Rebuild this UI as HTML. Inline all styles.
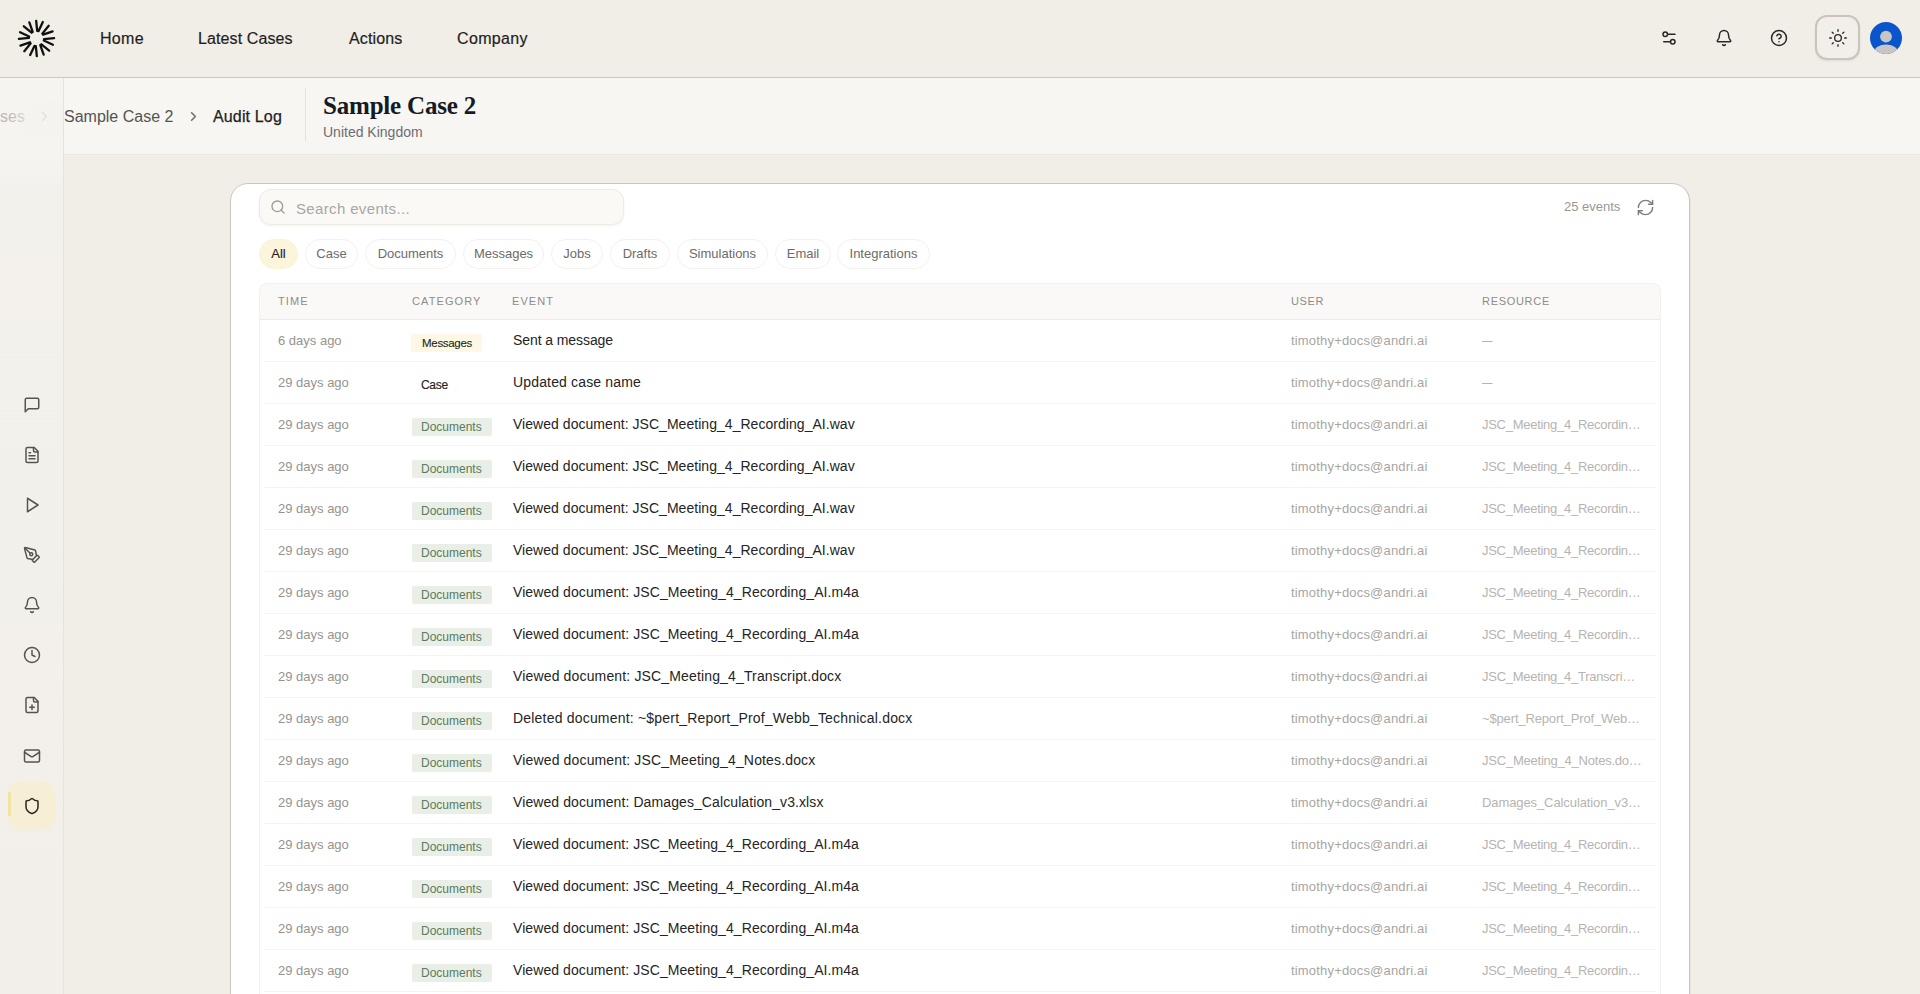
<!DOCTYPE html>
<html><head><meta charset="utf-8">
<style>
*{box-sizing:border-box;margin:0;padding:0}
html,body{width:1920px;height:994px;overflow:hidden;background:#f1eee8;font-family:"Liberation Sans",sans-serif;color:#1f1f1f}
.abs{position:absolute}
svg.i{position:absolute;fill:none;stroke:currentColor;stroke-width:2;stroke-linecap:round;stroke-linejoin:round}
#hdr{position:absolute;left:0;top:0;width:1920px;height:78px;background:#f1eee8;border-bottom:1px solid #cdc8bf}
.nav{position:absolute;top:29px;font-size:16px;color:#1f1f1f;line-height:20px;white-space:nowrap;-webkit-text-stroke:0.2px #1f1f1f}
.hic{color:#2a2826}
#sunbtn{position:absolute;left:1815px;top:15px;width:45px;height:45px;border:2px solid #cac4bb;border-radius:12px;background:#f2efea;box-shadow:0 1px 2px rgba(0,0,0,.08)}
#avatar{position:absolute;left:1870px;top:22px;width:32px;height:32px;border-radius:50%;background:#0a54cc;overflow:hidden}
#crumb{position:absolute;left:0;top:78px;width:1920px;height:77px;background:#f7f6f2;border-bottom:1px solid #ebe8e2}
.bcr{position:absolute;top:107px;font-size:16px;line-height:20px;white-space:nowrap}
#side{position:absolute;left:0;top:78px;width:64px;height:916px;border-right:1px solid #e6e3dd;background:linear-gradient(180deg,#f6f4f0 0,#f6f4f0 77px,#f3f1ec 110px,#f2efea 100%)}
#sidefade{position:absolute;left:0;top:78px;width:63px;height:77px;background:linear-gradient(90deg,rgba(244,242,238,.55),rgba(246,245,241,.35))}
.sic{width:18px;height:18px;color:#57544f}
#active{position:absolute;left:8px;top:782px;width:47px;height:48px;border-radius:12px;background:#f6efd5}
#activebar{position:absolute;left:8px;top:792px;width:2.5px;height:24px;background:#efe3a2;border-radius:1px}
#card{position:absolute;left:230px;top:183px;width:1460px;height:900px;background:#fff;border:1px solid #cbc6bd;border-radius:18px;box-shadow:1px 1px 1px rgba(0,0,0,.05)}
#search{position:absolute;left:259px;top:189px;width:365px;height:36px;border:1px solid #eeebe5;border-radius:12px;background:#faf9f6;box-shadow:0 1px 3px rgba(0,0,0,.06)}
.ph{position:absolute;left:296px;top:200px;font-size:15px;line-height:18px;color:#a9a7a3;letter-spacing:0.35px;white-space:nowrap}
.cnt{position:absolute;left:1564px;top:199px;font-size:13px;line-height:16px;color:#999794;white-space:nowrap}
.chip{position:absolute;top:239px;height:30px;border:1px solid #f3f1ee;border-radius:15px;font-size:13px;line-height:28px;text-align:center;color:#6d6b67;white-space:nowrap;background:#fff}
.chip.on{background:#fbf5dc;border-color:#faf3d8;color:#1f1f1f;-webkit-text-stroke:0.15px #1f1f1f}
#thead{position:absolute;left:259px;top:283px;width:1402px;height:37px;background:#faf9f7;border:1px solid #f3f1ed;border-bottom:1px solid #eeebe6;border-radius:8px 8px 0 0}
#tbody{position:absolute;left:259px;top:319px;width:1402px;height:700px;border-left:1px solid #f3f1ed;border-right:1px solid #f3f1ed}
.th{position:absolute;top:295px;font-size:11px;line-height:12px;letter-spacing:1.1px;color:#8e8c88;white-space:nowrap}
.row{position:absolute;left:260px;width:1400px;height:42px}
.row::after{content:"";position:absolute;left:4px;right:4px;bottom:0;height:1px;background:#f6f4f1}
.row>div{position:absolute;white-space:nowrap}
.tm{left:18px;top:13px;font-size:13px;line-height:16px;color:#959390}
.bdg{left:151px;top:14px;height:18px;font-size:12px;line-height:18px;padding:0 10px;border-radius:2px}
.bm{background:#fdf8e5;color:#262420;font-size:11.5px;letter-spacing:-0.3px;padding:0 10px 0 11px;-webkit-text-stroke:0.1px #262420}
.bc{color:#262420;letter-spacing:-0.3px;-webkit-text-stroke:0.15px #262420}
.bd{background:#e9eee6;color:#5b7b5a;margin-left:1px;padding:0 10px 0 9px}
.ev{left:253px;top:12px;font-size:14px;line-height:17px;color:#242424}
.us{left:1031px;top:13px;font-size:13px;line-height:16px;color:#a7a5a2;letter-spacing:0.18px}
.rs{left:1222px;top:13px;font-size:13px;line-height:16px;color:#b6b4b0}
</style></head><body>
<div id="hdr">
  <svg class="abs" style="left:17px;top:19px" width="39" height="39" viewBox="-19.5 -19.5 39 39"><path fill="none" stroke="#111" stroke-width="2.3" stroke-linecap="round" d="M0.66 -7.57L-0.31 -17.60M1.97 -7.34L6.31 -16.43M5.82 -4.89L12.23 -12.66M6.58 -3.80L16.08 -7.16M7.57 0.66L17.60 -0.31M7.34 1.97L16.43 6.31M4.89 5.82L12.66 12.23M3.80 6.58L7.16 16.08M-0.66 7.57L0.31 17.60M-1.97 7.34L-6.31 16.43M-5.82 4.89L-12.23 12.66M-6.58 3.80L-16.08 7.16M-7.57 -0.66L-17.60 0.31M-7.34 -1.97L-16.43 -6.31M-4.89 -5.82L-12.66 -12.23M-3.80 -6.58L-7.16 -16.08"/></svg>
  <div class="nav" style="left:100px;letter-spacing:0.3px">Home</div>
  <div class="nav" style="left:198px;letter-spacing:0.1px">Latest Cases</div>
  <div class="nav" style="left:349px;letter-spacing:0.15px">Actions</div>
  <div class="nav" style="left:457px;letter-spacing:0.35px">Company</div>
  <svg class="i hic" style="left:1660px;top:29px" width="18" height="18" viewBox="0 0 24 24"><path d="M20 7h-9"/><path d="M14 17H5"/><circle cx="17" cy="17" r="3"/><circle cx="7" cy="7" r="3"/></svg>
  <svg class="i hic" style="left:1715px;top:29px" width="18" height="18" viewBox="0 0 24 24"><path d="M10.268 21a2 2 0 0 0 3.464 0"/><path d="M3.262 15.326A1 1 0 0 0 4 17h16a1 1 0 0 0 .74-1.673C19.41 13.956 18 12.499 18 8A6 6 0 0 0 6 8c0 4.499-1.411 5.956-2.738 7.326"/></svg>
  <svg class="i hic" style="left:1770px;top:29px" width="18" height="18" viewBox="0 0 24 24"><circle cx="12" cy="12" r="10"/><path d="M9.09 9a3 3 0 0 1 5.83 1c0 2-3 3-3 3"/><path d="M12 17h.01"/></svg>
</div>
<div id="sunbtn"></div>
<svg class="i hic" style="left:1828px;top:28px;stroke-width:1.6" width="20" height="20" viewBox="0 0 24 24"><circle cx="12" cy="12" r="4"/><path d="M12 2v2"/><path d="M12 20v2"/><path d="m4.93 4.93 1.41 1.41"/><path d="m17.66 17.66 1.41 1.41"/><path d="M2 12h2"/><path d="M20 12h2"/><path d="m6.34 17.66-1.41 1.41"/><path d="m19.07 4.93-1.41 1.41"/></svg>
<div id="avatar"><svg width="32" height="32" viewBox="0 0 32 32"><circle cx="16" cy="14.6" r="5.9" fill="#c8c6c4"/><ellipse cx="16" cy="30.5" rx="12" ry="8" fill="#c8c6c4"/></svg></div>

<div id="crumb"></div>
<div class="bcr" style="left:64px;color:#555350">Sample Case 2</div>
<svg class="i" style="left:186px;top:109px;color:#66756a;stroke-width:2.6" width="15" height="15" viewBox="0 0 24 24"><path d="m9 18 6-6-6-6"/></svg>
<div class="bcr" style="left:213px;color:#1f1f1f;-webkit-text-stroke:0.25px #1f1f1f;letter-spacing:0.15px">Audit Log</div>
<div class="abs" style="left:305px;top:88px;width:1px;height:53px;background:#e7e2cf"></div>
<div class="abs" style="left:323px;top:92px;font-family:'Liberation Serif',serif;font-weight:bold;font-size:25px;letter-spacing:-0.2px;line-height:28px;color:#151a23;white-space:nowrap">Sample Case 2</div>
<div class="abs" style="left:323px;top:124px;font-size:14px;line-height:16px;color:#6e6c72;white-space:nowrap">United Kingdom</div>

<div id="side"></div>
<div class="bcr" style="left:0;color:#bab8b3">ses</div><div class="abs" style="left:8px;top:100px;width:55px;height:34px;background:linear-gradient(90deg,rgba(245,243,239,0),rgba(245,243,239,.75) 45%,rgba(245,243,239,.8))"></div>
<svg class="i" style="left:37px;top:109px;color:#e2e0dc;stroke-width:2.4" width="15" height="15" viewBox="0 0 24 24"><path d="m9 18 6-6-6-6"/></svg>
<svg class="i sic" style="left:23px;top:396px" viewBox="0 0 24 24"><path d="M21 15a2 2 0 0 1-2 2H7l-4 4V5a2 2 0 0 1 2-2h14a2 2 0 0 1 2 2z"/></svg>
<svg class="i sic" style="left:23px;top:446px" viewBox="0 0 24 24"><path d="M15 2H6a2 2 0 0 0-2 2v16a2 2 0 0 0 2 2h12a2 2 0 0 0 2-2V7Z"/><path d="M14 2v4a2 2 0 0 0 2 2h4"/><path d="M10 9H8"/><path d="M16 13H8"/><path d="M16 17H8"/></svg>
<svg class="i sic" style="left:23px;top:496px" viewBox="0 0 24 24"><polygon points="6 3 20 12 6 21 6 3"/></svg>
<svg class="i sic" style="left:23px;top:546px" viewBox="0 0 24 24"><path d="M15.707 21.293a1 1 0 0 1-1.414 0l-1.586-1.586a1 1 0 0 1 0-1.414l5.586-5.586a1 1 0 0 1 1.414 0l1.586 1.586a1 1 0 0 1 0 1.414z"/><path d="m18 13-1.375-6.874a1 1 0 0 0-.746-.776L3.235 2.028a1 1 0 0 0-1.207 1.207L5.35 15.879a1 1 0 0 0 .776.746L13 18"/><path d="m2.3 2.3 7.286 7.286"/><circle cx="11" cy="11" r="2"/></svg>
<svg class="i sic" style="left:23px;top:596px" viewBox="0 0 24 24"><path d="M10.268 21a2 2 0 0 0 3.464 0"/><path d="M3.262 15.326A1 1 0 0 0 4 17h16a1 1 0 0 0 .74-1.673C19.41 13.956 18 12.499 18 8A6 6 0 0 0 6 8c0 4.499-1.411 5.956-2.738 7.326"/></svg>
<svg class="i sic" style="left:23px;top:646px" viewBox="0 0 24 24"><circle cx="12" cy="12" r="10"/><polyline points="12 6 12 12 16 14"/></svg>
<svg class="i sic" style="left:23px;top:696px" viewBox="0 0 24 24"><path d="M15 2H6a2 2 0 0 0-2 2v16a2 2 0 0 0 2 2h12a2 2 0 0 0 2-2V7Z"/><path d="M14 2v4a2 2 0 0 0 2 2h4"/><path d="M9 15h6"/><path d="M12 18v-6"/></svg>
<svg class="i sic" style="left:23px;top:747px" viewBox="0 0 24 24"><rect width="20" height="16" x="2" y="4" rx="2"/><path d="m22 7-8.97 5.7a1.94 1.94 0 0 1-2.06 0L2 7"/></svg>
<div id="active"></div><div id="activebar"></div>
<svg class="i sic" style="left:23px;top:797px;color:#2a2620" viewBox="0 0 24 24"><path d="M20 13c0 5-3.5 7.5-7.66 8.95a1 1 0 0 1-.67-.01C7.5 20.5 4 18 4 13V6a1 1 0 0 1 1-1c2 0 4.5-1.2 6.24-2.72a1.17 1.17 0 0 1 1.52 0C14.51 3.81 17 5 19 5a1 1 0 0 1 1 1z"/></svg>

<div id="card"></div>
<div id="search"></div>
<svg class="i" style="left:270px;top:199px;color:#9c9a96" width="16" height="16" viewBox="0 0 24 24"><circle cx="11" cy="11" r="8"/><path d="m21 21-4.3-4.3"/></svg>
<div class="ph">Search events...</div>
<div class="cnt">25 events</div>
<svg class="i" style="left:1636px;top:198px;color:#7f7d79;stroke-width:1.8" width="19" height="19" viewBox="0 0 24 24"><path d="M3 12a9 9 0 0 1 9-9 9.75 9.75 0 0 1 6.74 2.74L21 8"/><path d="M21 3v5h-5"/><path d="M21 12a9 9 0 0 1-9 9 9.75 9.75 0 0 1-6.74-2.74L3 16"/><path d="M8 16H3v5"/></svg>

<div class="chip on" style="left:259px;width:39px">All</div>
<div class="chip" style="left:305px;width:53px">Case</div>
<div class="chip" style="left:365px;width:91px">Documents</div>
<div class="chip" style="left:463px;width:81px">Messages</div>
<div class="chip" style="left:551px;width:52px">Jobs</div>
<div class="chip" style="left:610px;width:60px">Drafts</div>
<div class="chip" style="left:677px;width:91px">Simulations</div>
<div class="chip" style="left:775px;width:56px">Email</div>
<div class="chip" style="left:837px;width:93px">Integrations</div>

<div id="thead"></div>
<div id="tbody"></div>
<div class="th" style="left:278px">TIME</div>
<div class="th" style="left:412px">CATEGORY</div>
<div class="th" style="left:512px">EVENT</div>
<div class="th" style="left:1291px;letter-spacing:0.6px">USER</div>
<div class="th" style="left:1482px;letter-spacing:0.7px">RESOURCE</div>
<div class="row" style="top:320px"><div class="tm">6 days ago</div><div class="bdg bm">Messages</div><div class="ev" style="letter-spacing:-0.084px">Sent a message</div><div class="us">timothy+docs@andri.ai</div><div class="rs" style="letter-spacing:0px"><span style="display:inline-block;transform:scaleX(0.8);transform-origin:0 50%">—</span></div></div>
<div class="row" style="top:362px"><div class="tm">29 days ago</div><div class="bdg bc">Case</div><div class="ev" style="letter-spacing:0.158px">Updated case name</div><div class="us">timothy+docs@andri.ai</div><div class="rs" style="letter-spacing:0px"><span style="display:inline-block;transform:scaleX(0.8);transform-origin:0 50%">—</span></div></div>
<div class="row" style="top:404px"><div class="tm">29 days ago</div><div class="bdg bd">Documents</div><div class="ev" style="letter-spacing:0.04px">Viewed document: JSC_Meeting_4_Recording_AI.wav</div><div class="us">timothy+docs@andri.ai</div><div class="rs" style="letter-spacing:-0.273px">JSC_Meeting_4_Recordin…</div></div>
<div class="row" style="top:446px"><div class="tm">29 days ago</div><div class="bdg bd">Documents</div><div class="ev" style="letter-spacing:0.04px">Viewed document: JSC_Meeting_4_Recording_AI.wav</div><div class="us">timothy+docs@andri.ai</div><div class="rs" style="letter-spacing:-0.273px">JSC_Meeting_4_Recordin…</div></div>
<div class="row" style="top:488px"><div class="tm">29 days ago</div><div class="bdg bd">Documents</div><div class="ev" style="letter-spacing:0.04px">Viewed document: JSC_Meeting_4_Recording_AI.wav</div><div class="us">timothy+docs@andri.ai</div><div class="rs" style="letter-spacing:-0.273px">JSC_Meeting_4_Recordin…</div></div>
<div class="row" style="top:530px"><div class="tm">29 days ago</div><div class="bdg bd">Documents</div><div class="ev" style="letter-spacing:0.04px">Viewed document: JSC_Meeting_4_Recording_AI.wav</div><div class="us">timothy+docs@andri.ai</div><div class="rs" style="letter-spacing:-0.273px">JSC_Meeting_4_Recordin…</div></div>
<div class="row" style="top:572px"><div class="tm">29 days ago</div><div class="bdg bd">Documents</div><div class="ev" style="letter-spacing:0.081px">Viewed document: JSC_Meeting_4_Recording_AI.m4a</div><div class="us">timothy+docs@andri.ai</div><div class="rs" style="letter-spacing:-0.273px">JSC_Meeting_4_Recordin…</div></div>
<div class="row" style="top:614px"><div class="tm">29 days ago</div><div class="bdg bd">Documents</div><div class="ev" style="letter-spacing:0.081px">Viewed document: JSC_Meeting_4_Recording_AI.m4a</div><div class="us">timothy+docs@andri.ai</div><div class="rs" style="letter-spacing:-0.273px">JSC_Meeting_4_Recordin…</div></div>
<div class="row" style="top:656px"><div class="tm">29 days ago</div><div class="bdg bd">Documents</div><div class="ev" style="letter-spacing:0.152px">Viewed document: JSC_Meeting_4_Transcript.docx</div><div class="us">timothy+docs@andri.ai</div><div class="rs" style="letter-spacing:-0.27px">JSC_Meeting_4_Transcri…</div></div>
<div class="row" style="top:698px"><div class="tm">29 days ago</div><div class="bdg bd">Documents</div><div class="ev" style="letter-spacing:0.197px">Deleted document: ~$pert_Report_Prof_Webb_Technical.docx</div><div class="us">timothy+docs@andri.ai</div><div class="rs" style="letter-spacing:-0.143px">~$pert_Report_Prof_Web…</div></div>
<div class="row" style="top:740px"><div class="tm">29 days ago</div><div class="bdg bd">Documents</div><div class="ev" style="letter-spacing:0.15px">Viewed document: JSC_Meeting_4_Notes.docx</div><div class="us">timothy+docs@andri.ai</div><div class="rs" style="letter-spacing:-0.225px">JSC_Meeting_4_Notes.do…</div></div>
<div class="row" style="top:782px"><div class="tm">29 days ago</div><div class="bdg bd">Documents</div><div class="ev" style="letter-spacing:0.094px">Viewed document: Damages_Calculation_v3.xlsx</div><div class="us">timothy+docs@andri.ai</div><div class="rs" style="letter-spacing:-0.094px">Damages_Calculation_v3…</div></div>
<div class="row" style="top:824px"><div class="tm">29 days ago</div><div class="bdg bd">Documents</div><div class="ev" style="letter-spacing:0.081px">Viewed document: JSC_Meeting_4_Recording_AI.m4a</div><div class="us">timothy+docs@andri.ai</div><div class="rs" style="letter-spacing:-0.273px">JSC_Meeting_4_Recordin…</div></div>
<div class="row" style="top:866px"><div class="tm">29 days ago</div><div class="bdg bd">Documents</div><div class="ev" style="letter-spacing:0.081px">Viewed document: JSC_Meeting_4_Recording_AI.m4a</div><div class="us">timothy+docs@andri.ai</div><div class="rs" style="letter-spacing:-0.273px">JSC_Meeting_4_Recordin…</div></div>
<div class="row" style="top:908px"><div class="tm">29 days ago</div><div class="bdg bd">Documents</div><div class="ev" style="letter-spacing:0.081px">Viewed document: JSC_Meeting_4_Recording_AI.m4a</div><div class="us">timothy+docs@andri.ai</div><div class="rs" style="letter-spacing:-0.273px">JSC_Meeting_4_Recordin…</div></div>
<div class="row" style="top:950px"><div class="tm">29 days ago</div><div class="bdg bd">Documents</div><div class="ev" style="letter-spacing:0.081px">Viewed document: JSC_Meeting_4_Recording_AI.m4a</div><div class="us">timothy+docs@andri.ai</div><div class="rs" style="letter-spacing:-0.273px">JSC_Meeting_4_Recordin…</div></div>
<div class="row" style="top:992px"><div class="tm">29 days ago</div><div class="bdg bd">Documents</div><div class="ev" style="letter-spacing:0.081px">Viewed document: JSC_Meeting_4_Recording_AI.m4a</div><div class="us">timothy+docs@andri.ai</div><div class="rs" style="letter-spacing:-0.273px">JSC_Meeting_4_Recordin…</div></div>
</body></html>
